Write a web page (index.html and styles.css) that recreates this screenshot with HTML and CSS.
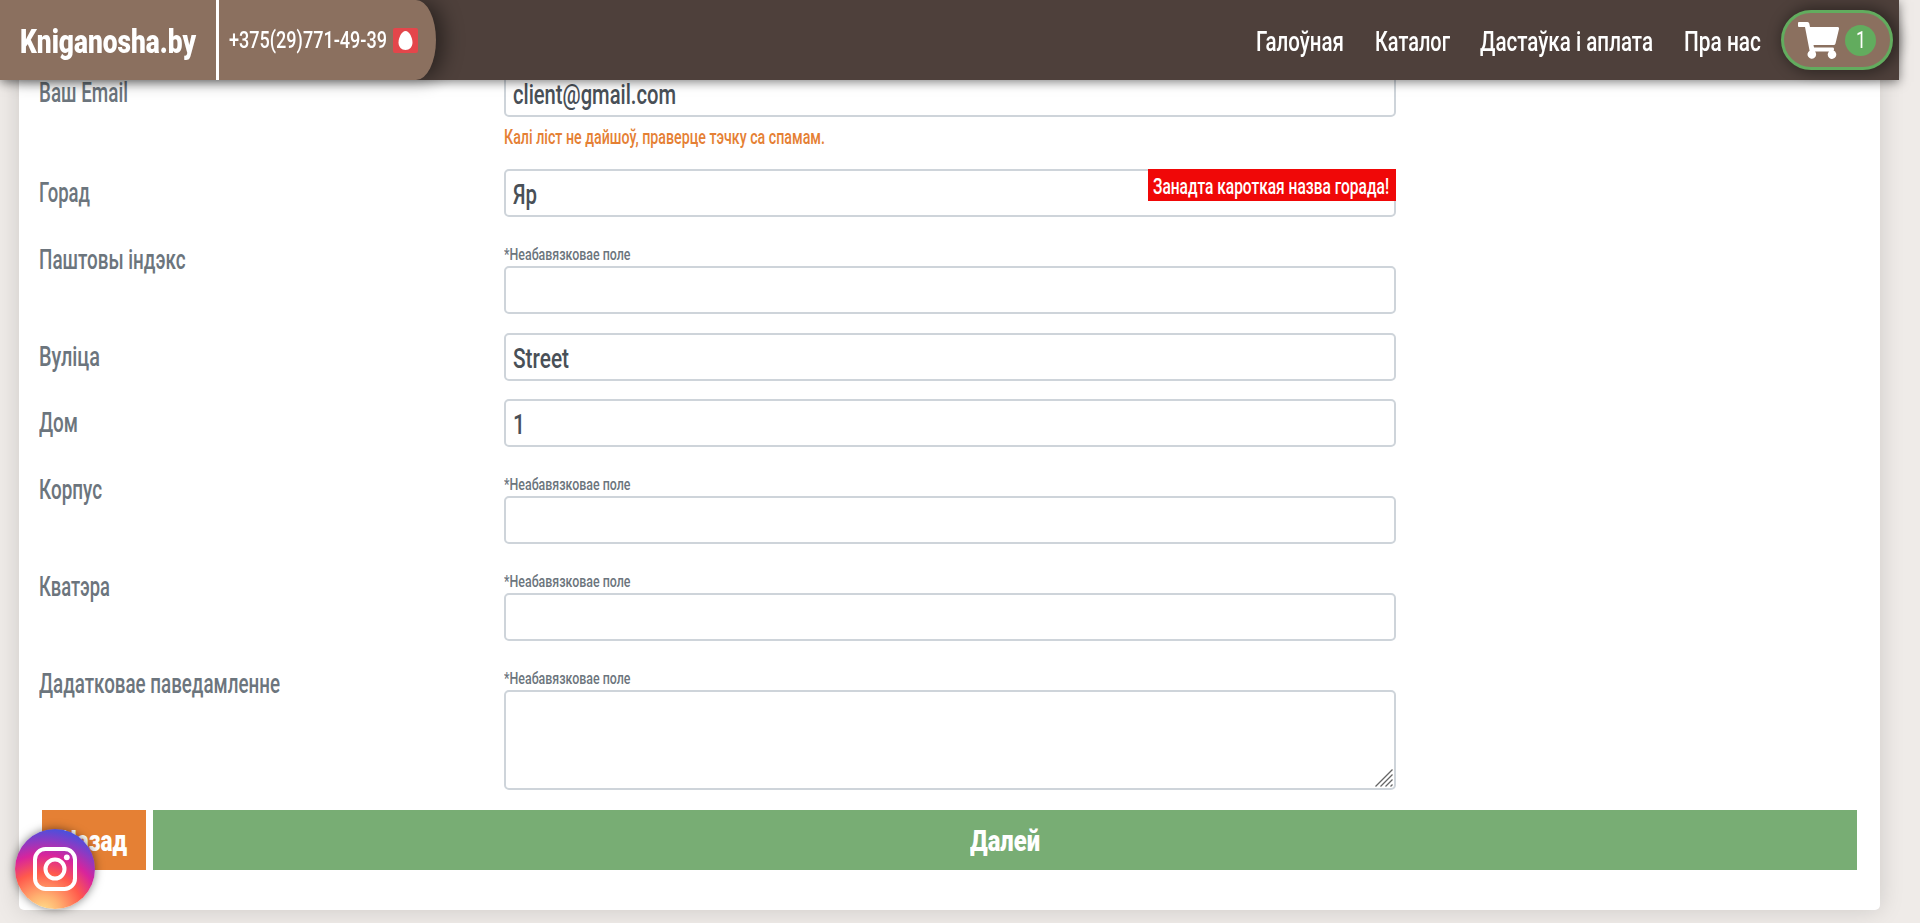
FILE: index.html
```
<!DOCTYPE html>
<html lang="be">
<head>
<meta charset="utf-8">
<title>Kniganosha.by</title>
<link rel="stylesheet" href="styles.css">
</head>
<body>
<header class="header">
  <div class="brand">
    <a class="logo"><span class="fit" data-w="176">Kniganosha.by</span></a>
    <div class="phone">
      <span class="fit" data-w="158">+375(29)771-49-39</span>
      <svg class="operator" viewBox="0 0 25 25"><rect width="25" height="25" rx="2" fill="#e3464b"/><path d="M12.5 3C16.5 3 19.5 10 19.5 14.5C19.5 19 16.5 22 12.5 22S5.500 19 5.500 14.500C5.500 10 8.500 3 12.500 3Z" fill="#fff"/></svg>
    </div>
  </div>
  <nav class="nav">
    <a><span class="fit" data-w="88">Галоўная</span></a>
    <a><span class="fit" data-w="75">Каталог</span></a>
    <a><span class="fit" data-w="173">Дастаўка і аплата</span></a>
    <a><span class="fit" data-w="77">Пра нас</span></a>
  </nav>
  <a class="cart">
    <svg class="cart-icon" viewBox="0 0 41 37"><path d="M1 0H9.500Q11 0 11.300 1.500L12 5H39.500Q41.300 5 41 7L37.500 21.500Q37.200 23 35.500 23H15.500L16 25.500H34.500Q36.300 25.500 36 27.500L35.600 28.600A4.300 4.300 0 1 1 31 29.500H17A4.300 4.300 0 1 1 11.600 28.700L7 5H1Q0 5 0 4V1Q0 0 1 0Z" fill="#fff"/></svg>
    <span class="badge"><span class="fit" data-w="10">1</span></span>
  </a>
</header>

<main class="card">
  <form class="form">
    <div class="row row-email">
      <label class="label"><span class="fit" data-w="89">Ваш Email</span></label>
      <div class="control">
        <div class="field"><span class="fit" data-w="163">client@gmail.com</span></div>
        <div class="help"><span class="fit" data-w="321">Калі ліст не дайшоў, праверце тэчку са спамам.</span></div>
      </div>
    </div>
    <div class="row">
      <label class="label"><span class="fit" data-w="51">Горад</span></label>
      <div class="control">
        <div class="field"><span class="fit" data-w="24">Яр</span></div>
        <div class="error"><span class="fit" data-w="236">Занадта кароткая назва горада!</span></div>
      </div>
    </div>
    <div class="row">
      <label class="label"><span class="fit" data-w="146.5">Паштовы індэкс</span></label>
      <div class="control">
        <div class="note"><span class="fit" data-w="126.5">*Неабавязковае поле</span></div>
        <div class="field"></div>
      </div>
    </div>
    <div class="row">
      <label class="label"><span class="fit" data-w="61">Вуліца</span></label>
      <div class="control"><div class="field"><span class="fit" data-w="56">Street</span></div></div>
    </div>
    <div class="row">
      <label class="label"><span class="fit" data-w="39">Дом</span></label>
      <div class="control"><div class="field"><span class="fit" data-w="12">1</span></div></div>
    </div>
    <div class="row">
      <label class="label"><span class="fit" data-w="63">Корпус</span></label>
      <div class="control">
        <div class="note"><span class="fit" data-w="126.5">*Неабавязковае поле</span></div>
        <div class="field"></div>
      </div>
    </div>
    <div class="row">
      <label class="label"><span class="fit" data-w="71">Кватэра</span></label>
      <div class="control">
        <div class="note"><span class="fit" data-w="126.5">*Неабавязковае поле</span></div>
        <div class="field"></div>
      </div>
    </div>
    <div class="row">
      <label class="label"><span class="fit" data-w="241">Дадатковае паведамленне</span></label>
      <div class="control">
        <div class="note"><span class="fit" data-w="126.5">*Неабавязковае поле</span></div>
        <div class="field area">
          <svg class="grip" viewBox="0 0 18 18"><path d="M.5 17.500L17.500 .5M5.500 17.500L17.500 5.500M10.500 17.500L17.500 10.500M15.500 17.500L17.500 15.500" stroke="#666" stroke-width="1.300" fill="none"/></svg>
        </div>
      </div>
    </div>
    <div class="actions">
      <a class="btn back"><span class="fit" data-w="66">Назад</span></a>
      <a class="btn next"><span class="fit" data-w="70">Далей</span></a>
    </div>
  </form>
</main>

<a class="instagram">
  <svg viewBox="0 0 44 44"><g fill="none" stroke="#fff" stroke-width="4"><rect x="2" y="2" width="40" height="40" rx="10.500"/><circle cx="22" cy="22" r="9.500"/></g><circle cx="33.800" cy="10.300" r="2.900" fill="#fff"/></svg>
</a>
<script src="fit.js"></script>
</body>
</html>
```
FILE: styles.css
```
* { box-sizing: border-box; }
body {
  margin: 0;
  height: 923px;
  overflow: hidden;
  background: #efebe8;
  color: #6c757d;
  font-family: Roboto, "Open Sans", sans-serif;
  font-size: 27.5px;
}
.fit {
  display: inline-block;
  white-space: nowrap;
  transform-origin: 0 50%;
}
.header {
  position: fixed;
  z-index: 2;
  top: 0;
  left: 0;
  width: 1899px;
  height: 80px;
  display: flex;
  align-items: center;
  background: #4e403b;
  color: #fff;
  box-shadow: 0 2px 10px rgba(0, 0, 0, .5);
}
.brand {
  display: flex;
  width: 436px;
  height: 80px;
  background: #8b705f;
  border-radius: 0 20px 20px 0 / 0 40px 40px 0;
  box-shadow: 10px 0 20px -2px rgba(0, 0, 0, .45);
}
.logo {
  width: 219px;
  padding: 1px 0 0 20px;
  border-right: 3px solid #fff;
  font-size: 34px;
  font-weight: 900;
  line-height: 80px;
}
.phone {
  display: flex;
  align-items: center;
  gap: 6px;
  padding-left: 10px;
  font-size: 23px;
  font-weight: 500;
  line-height: 83px;
}
.operator { width: 25px; height: 25px; }
.nav {
  display: flex;
  gap: 30.5px;
  margin-left: auto;
  margin-right: 20.5px;
  font-size: 28.5px;
  font-weight: 500;
  line-height: 80px;
  padding-top: 4px;
}
.cart {
  display: flex;
  align-items: center;
  gap: 6px;
  width: 112px;
  height: 60px;
  margin-right: 6px;
  padding-left: 14px;
  border: 3px solid #62ac5e;
  border-radius: 30px;
  background: #8b705f;
  box-shadow: 3px 0 14px 3px rgba(0, 0, 0, .4);
}
.cart-icon { width: 41px; height: 37px; }
.badge {
  display: flex;
  justify-content: center;
  width: 31px;
  height: 31px;
  border-radius: 50%;
  background: #62ac5e;
  font-size: 23px;
  line-height: 32px;
}
.card {
  width: 1861px;
  height: 910px;
  margin-left: 19px;
  padding: 69px 23px 0 20px;
  background: #fff;
  border-radius: 0 0 5px 5px;
  box-shadow: 0 0 24px rgba(0, 0, 0, .15);
}
.row {
  display: grid;
  grid-template-columns: 465px 892px;
  padding-bottom: 18.8px;
}
.row-email { padding-bottom: 20px; }
.label {
  height: 48px;
  font-weight: 500;
  line-height: 47px;
}
.control { position: relative; }
.field {
  height: 48px;
  padding: 2px 7px 0;
  border: 2px solid #ced4da;
  border-radius: 5px;
  color: #495057;
  font-weight: 500;
  line-height: 44px;
}
.help {
  height: 32px;
  color: #e58034;
  font-size: 20px;
  font-weight: 500;
  line-height: 40px;
}
.note {
  height: 30px;
  font-size: 16.5px;
  font-weight: 500;
  line-height: 38px;
}
.error {
  position: absolute;
  top: 0;
  right: 0;
  width: 248px;
  height: 32px;
  padding-left: 5px;
  background: #f00808;
  color: #fff;
  font-size: 21.5px;
  font-weight: 500;
  line-height: 35px;
}
.area {
  display: flex;
  align-items: flex-end;
  justify-content: flex-end;
  height: 100px;
  padding: 1px;
}
.grip { width: 18px; height: 18px; }
.actions {
  display: flex;
  gap: 7px;
  margin-top: 1.4px;
  padding-left: 3px;
}
.btn {
  display: flex;
  justify-content: center;
  height: 60px;
  color: #fff;
  font-size: 29.5px;
  font-weight: 900;
  line-height: 62px;
}
.back { width: 104px; background: #e58034; }
.next { flex: 1; background: #78ad74; }
.instagram {
  position: fixed;
  z-index: 3;
  left: 15px;
  top: 829px;
  display: flex;
  align-items: center;
  justify-content: center;
  width: 80px;
  height: 80px;
  border-radius: 50%;
  background: radial-gradient(circle at 35% 105%, #ffe58e 0%, #ffb070 18%, #ff5a4c 41%, #d8249c 59%, #8a3bc4 74%, #4a50dc 86%);
  box-shadow: 0 0 10px rgba(0, 0, 0, .5);
}
.instagram svg { width: 44px; height: 44px; }
```
FILE: fit.js
```
// Condenses each label horizontally to its set width, in px.
document.querySelectorAll('.fit').forEach(function (el) {
  var target = Number(el.dataset.w);
  var natural = el.getBoundingClientRect().width;
  el.style.transform = 'scaleX(' + target / natural + ')';
  el.style.marginRight = (target - natural) + 'px';
});
```
